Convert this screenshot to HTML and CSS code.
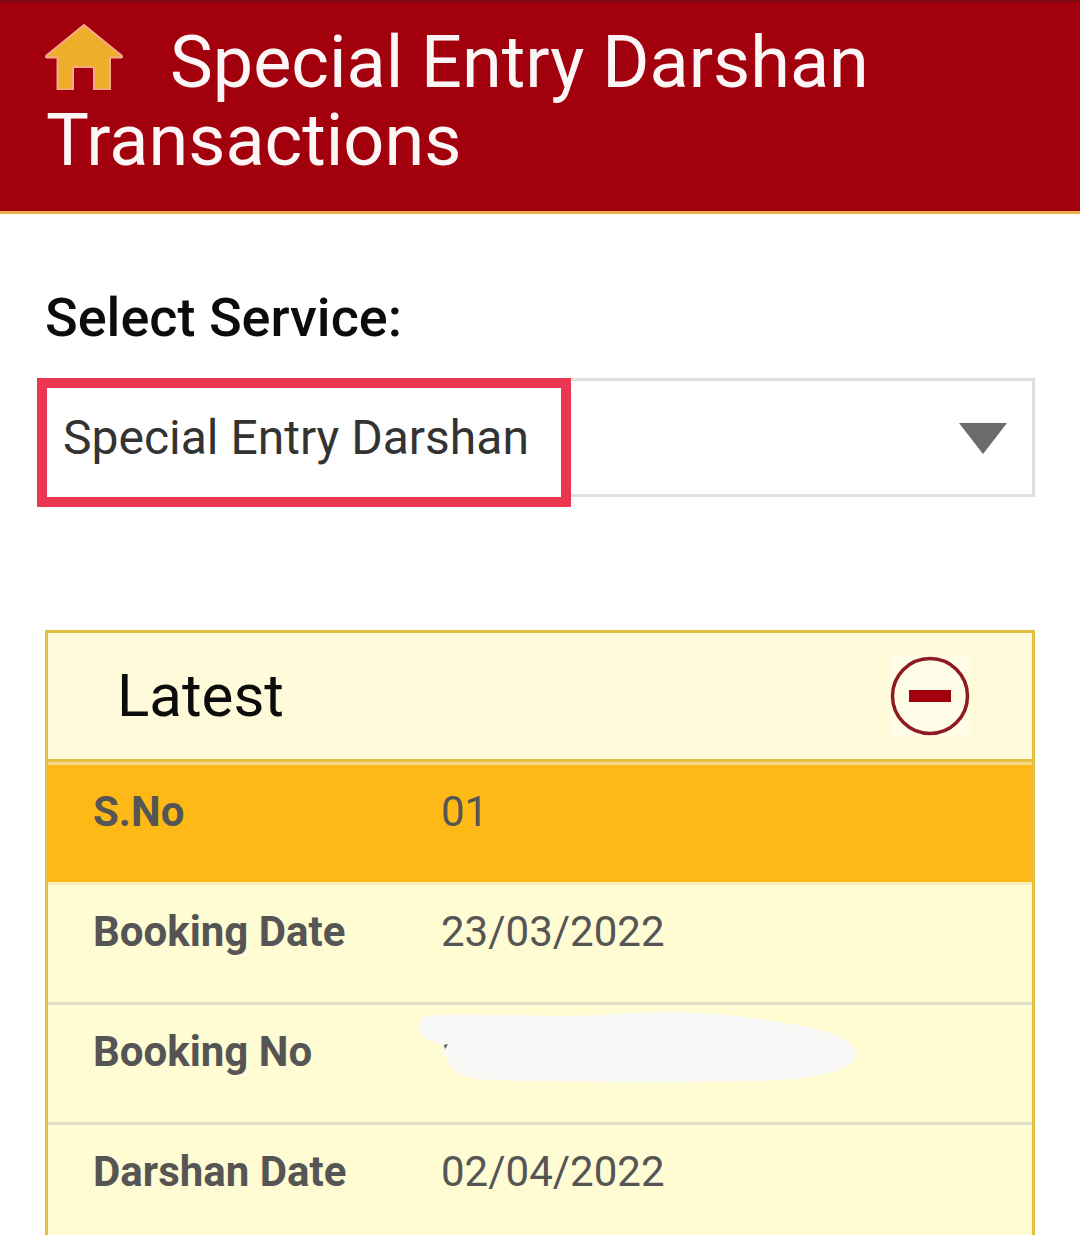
FILE: index.html
```html
<!DOCTYPE html>
<html lang="en">
<head>
<meta charset="utf-8">
<title>Special Entry Darshan Transactions</title>
<link rel="stylesheet" href="styles.css">
</head>
<body>
<header class="page-header">
  <h1 class="title"><svg class="home" viewBox="0 0 78 66" aria-hidden="true"><path d="M39 1 L76.500 31.500 Q78 33.500 75.500 33.500 L65 33.500 L65 65.500 L49 65.500 L49 45 Q49 43 47 43 L30 43 Q28 43 28 45 L28 65.500 L12.500 65.500 L12.500 33.500 L2.500 33.500 Q0 33.500 1.500 31.500 Z" fill="#efae2a" stroke="#f7a98a" stroke-width="2" stroke-linejoin="round"/></svg>Special Entry Darshan Transactions</h1>
</header>
<main class="content">
  <label class="service-label">Select Service:</label>
  <div class="select-wrap">
    <div class="select">
      <span class="select-value">Special Entry Darshan</span>
      <span class="caret"></span>
    </div>
    <div class="highlight"></div>
  </div>
  <section class="panel">
    <div class="panel-head">
      <span class="panel-title">Latest</span>
      <svg class="collapse" viewBox="0 0 80 80" aria-hidden="true"><rect width="80" height="80" fill="#fffde8"/><circle cx="40" cy="40" r="37.5" fill="none" stroke="#8e1b20" stroke-width="3.500"/><rect x="19" y="34" width="42" height="12" fill="#a3000e"/></svg>
    </div>
    <div class="row row-first"><span class="key">S.No</span><span class="val">01</span></div>
    <div class="row"><span class="key">Booking Date</span><span class="val">23/03/2022</span></div>
    <div class="row"><span class="key">Booking No</span><span class="val masked">
      <svg class="blob" viewBox="0 0 440 74" aria-hidden="true"><path d="M6 6 C60 2 120 8 180 5 C240 0 290 1 340 9 C390 15 436 26 438 42 C438 58 410 68 360 70 C280 73 150 72 70 70 C40 68 28 58 24 34 C12 32 0 26 1 16 C2 10 3 8 6 6 Z" fill="#f9f9f7"/><path d="M26 35 L30 34 L27 39 Z" fill="#555"/></svg>
    </span></div>
    <div class="row"><span class="key">Darshan Date</span><span class="val">02/04/2022</span></div>
  </section>
</main>
</body>
</html>
```
FILE: styles.css
```css
* { box-sizing: border-box; }
html, body { margin: 0; padding: 0; }
body {
  width: 1080px;
  height: 1235px;
  overflow: hidden;
  background: #fff;
  font-family: Roboto, "Liberation Sans", sans-serif;
}
.page-header {
  height: 214px;
  background: #a3000e;
  border-top: 2px solid #7e0a16;
  border-bottom: 3px solid #f0ac4a;
  padding: 22px 46px 0;
}
.title {
  margin: 0;
  font-size: 72px;
  font-weight: 400;
  line-height: 78px;
  color: #fdf6f6;
}
.home {
  width: 78px;
  height: 66px;
  margin-left: -1px;
  margin-right: 47px;
  vertical-align: -3px;
}
.content { padding: 0 45px; }
.service-label {
  display: block;
  margin-top: 75px;
  font-size: 54px;
  line-height: 58px;
  font-weight: 500;
  color: #0c0c0c;
}
.select-wrap { position: relative; margin-top: 31px; }
.select {
  height: 119px;
  border: 3px solid #dfdfdf;
  display: flex;
  align-items: center;
  justify-content: space-between;
  padding: 0 25px 0 15px;
}
.select-value {
  position: relative;
  z-index: 1;
  font-size: 48px;
  color: #333;
}
.caret {
  width: 0;
  height: 0;
  margin-top: 2px;
  border-left: 24px solid transparent;
  border-right: 24px solid transparent;
  border-top: 31px solid #6b6b6b;
}
.highlight {
  position: absolute;
  left: -8px;
  top: 0;
  width: 534px;
  height: 129px;
  border: 10px solid #ea3650;
  background: #fff;
}
.panel {
  margin-top: 133px;
  height: 640px;
  border: 3px solid #e2bf3e;
  border-bottom: 0;
  background: #fffbd2;
}
.panel-head {
  height: 129px;
  background: #fffad9;
  border-bottom: 3px solid #e2bf3e;
  display: flex;
  align-items: center;
  justify-content: space-between;
  padding: 0 62px 2px 69px;
}
.panel-title {
  font-size: 60px;
  color: #0c0c0c;
}
.collapse { width: 80px; height: 80px; margin-top: 2px; }
.row {
  height: 120px;
  display: flex;
  align-items: center;
  padding: 0 0 24px 45px;
  border-bottom: 3px solid #dedcc6;
  font-size: 42px;
  color: #555;
}
.row-first {
  height: 123px;
  background: #ffb916;
  border-bottom: 3px solid #f8efbb;
  border-top: 3px solid #f8d98a;
}
.key { width: 348px; font-weight: 700; }
.masked { position: relative; }
.blob {
  position: absolute;
  left: -23px;
  top: -42px;
  width: 440px;
  height: 74px;
}
```
